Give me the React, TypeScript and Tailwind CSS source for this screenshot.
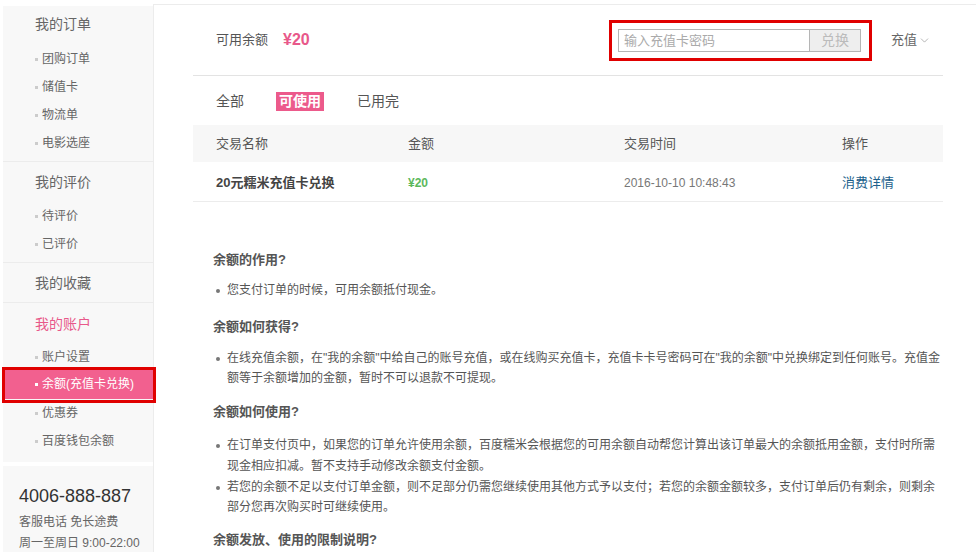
import React from 'react';
import { ChevronDown } from 'lucide-react';

type NavGroup = {
  title: string;
  active?: boolean;
  items: { label: string; active?: boolean }[];
  pad: string;
  gap: string;
};

const groups: NavGroup[] = [
  { title: '我的订单', pad: 'pt-[4px] pb-[4px]', gap: 'mt-[7px]', items: [{ label: '团购订单' }, { label: '储值卡' }, { label: '物流单' }, { label: '电影选座' }] },
  { title: '我的评价', pad: 'pt-[6px] pb-[4px]', gap: 'mt-[6px]', items: [{ label: '待评价' }, { label: '已评价' }] },
  { title: '我的收藏', pad: 'pt-[6px] pb-[5px]', gap: '', items: [] },
  {
    title: '我的账户',
    active: true,
    pad: 'pt-[7px] pb-[7px]',
    gap: 'mt-[5px]',
    items: [{ label: '账户设置' }, { label: '余额(充值卡兑换)', active: true }, { label: '优惠券' }, { label: '百度钱包余额' }],
  },
];

const Sidebar: React.FC = () => (
  <div className="w-[150px] shrink-0 ml-[3px] mt-px">
    <div className="bg-[#f8f8f8]">
      {groups.map((g, i) => (
        <div key={g.title} className={`${g.pad} ${i > 0 ? 'border-t border-[#ececec]' : ''}`}>
          <div className={`h-7 leading-7 pl-[32px] text-[14px] ${g.active ? 'text-[#e8588a]' : 'text-[#666]'}`}>
            {g.title}
          </div>
          {g.items.length > 0 && (
            <ul className={g.gap}>
              {g.items.map((it) =>
                it.active ? (
                  <li key={it.label} className="relative h-7">
                    <div className="absolute left-[2px] right-0 -top-[2px] bottom-0 flex items-center pl-[30px] bg-[#f2608f] text-white text-[12px]">
                      <span className="w-[3px] h-[3px] bg-white mr-[4px]" />
                      {it.label}
                    </div>
                    <span className="absolute -left-px -right-[3px] -top-[4px] -bottom-[4px] border-[3px] border-[#e00000]" />
                  </li>
                ) : (
                  <li key={it.label} className="h-7 flex items-center pl-[32px] text-[12px] text-[#666]">
                    <span className="w-[3px] h-[3px] bg-[#ccc] mr-[4px]" />
                    {it.label}
                  </li>
                )
              )}
            </ul>
          )}
        </div>
      ))}
    </div>
    <div className="mt-[4px] bg-[#f8f8f8] h-[90px] pl-[16px] pt-[18px]">
      <div className="text-[18px] leading-[24px] text-[#333]">4006-888-887</div>
      <div className="mt-[4px] text-[12px] leading-[21px] text-[#666]">客服电话 免长途费</div>
      <div className="text-[12px] leading-[21px] text-[#666]">周一至周日 9:00-22:00</div>
    </div>
  </div>
);

const faq: { q: string; gap: string; ulGap: string; items: string[][] }[] = [
  { q: '余额的作用?', gap: 'mt-[48px]', ulGap: 'mt-[10px]', items: [['您支付订单的时候，可用余额抵付现金。']] },
  {
    q: '余额如何获得?',
    gap: 'mt-[16px]',
    ulGap: 'mt-[11px]',
    items: [
      [
        '在线充值余额，在"我的余额"中给自己的账号充值，或在线购买充值卡，充值卡卡号密码可在"我的余额"中兑换绑定到任何账号。充值金',
        '额等于余额增加的金额，暂时不可以退款不可提现。',
      ],
    ],
  },
  {
    q: '余额如何使用?',
    gap: 'mt-[13px]',
    ulGap: 'mt-[13px]',
    items: [
      [
        '在订单支付页中，如果您的订单允许使用余额，百度糯米会根据您的可用余额自动帮您计算出该订单最大的余额抵用金额，支付时所需',
        '现金相应扣减。暂不支持手动修改余额支付金额。',
      ],
      [
        '若您的余额不足以支付订单金额，则不足部分仍需您继续使用其他方式予以支付；若您的余额金额较多，支付订单后仍有剩余，则剩余',
        '部分您再次购买时可继续使用。',
      ],
    ],
  },
  { q: '余额发放、使用的限制说明?', gap: 'mt-[12px]', ulGap: '', items: [] },
];

export default function App() {
  return (
    <div className="w-[976px] h-[552px] overflow-hidden bg-white pt-[5px] flex font-['Liberation_Sans','Noto_Sans_CJK_SC',sans-serif]">
      <Sidebar />
      <div className="flex-1 border-t border-l border-[#ececec] -mt-px">
        <div className="ml-[39px] w-[750px]">
          {/* header */}
          <div className="h-[71px] flex items-center border-b border-[#e3e3e3] pl-[23px] pr-[12px]">
            <span className="text-[13px] text-[#555]">可用余额</span>
            <span className="ml-[15px] text-[16px] font-bold text-[#e8588a]">¥20</span>
            <div className="ml-auto relative flex h-[23px]">
              <input
                placeholder="输入充值卡密码"
                className="w-[192px] h-[23px] border border-[#b5b5b5] px-[5px] text-[13px] text-[#555] placeholder:text-[#aaa] outline-none"
              />
              <button className="w-[52px] h-[23px] -ml-px border border-[#b5b5b5] bg-[#eeeeee] text-[14px] text-[#bbb]">
                兑换
              </button>
              <span className="absolute -left-[9px] -right-[11px] -top-[9px] -bottom-[9px] border-[3px] border-[#e00000] pointer-events-none" />
            </div>
            <span className="ml-[30px] flex items-center gap-px text-[13px] text-[#666]">
              充值
              <ChevronDown size={13} strokeWidth={1} className="text-[#777]" />
            </span>
          </div>

          {/* tabs */}
          <div className="h-[49px] flex items-center pl-[23px] pt-px text-[14px] text-[#555]">
            <span>全部</span>
            <span className="ml-[32px] h-[19px] px-[3px] leading-[19px] bg-[#ec5a8b] text-white font-bold">可使用</span>
            <span className="ml-[33px]">已用完</span>
          </div>

          {/* table */}
          <div className="h-[37px] grid grid-cols-[192px_216px_218px_1fr] items-center pl-[23px] pt-px bg-[#f7f7f7] text-[13px] text-[#555]">
            <span>交易名称</span>
            <span>金额</span>
            <span>交易时间</span>
            <span>操作</span>
          </div>
          <div className="h-[40px] grid grid-cols-[192px_216px_218px_1fr] items-center pl-[23px] pt-[3px] border-b border-[#ececec]">
            <span className="text-[13px] font-bold text-[#444]">20元糯米充值卡兑换</span>
            <span className="text-[12px] font-bold text-[#5cb85c]">¥20</span>
            <span className="text-[12px] text-[#777]">2016-10-10 10:48:43</span>
            <span className="text-[13px] text-[#1b5f8c]">消费详情</span>
          </div>

          {/* faq */}
          <div className="pl-[20px]">
            {faq.map((f) => (
              <div key={f.q}>
                <h4 className={`${f.gap} h-5 leading-5 text-[13px] font-bold text-[#555]`}>{f.q}</h4>
                {f.items.length > 0 && (
                  <ul className={f.ulGap}>
                    {f.items.map((lines) => (
                      <li key={lines[0]} className="flex text-[12px] leading-[20.7px] text-[#555]">
                        <span className="w-[4px] h-[4px] rounded-full bg-[#777] mt-[9px] ml-[3px] mr-[7px] shrink-0" />
                        <span className="whitespace-nowrap">
                          {lines.map((l, i) => (
                            <React.Fragment key={i}>
                              {i > 0 && <br />}
                              {l}
                            </React.Fragment>
                          ))}
                        </span>
                      </li>
                    ))}
                  </ul>
                )}
              </div>
            ))}
          </div>
        </div>
      </div>
    </div>
  );
}
